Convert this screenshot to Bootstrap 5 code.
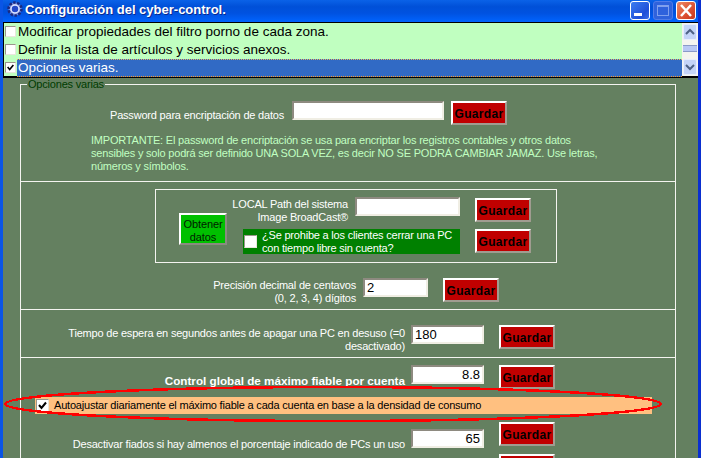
<!DOCTYPE html>
<html lang="es">
<head>
<meta charset="utf-8">
<title>Configuración del cyber-control.</title>
<link href="https://cdn.jsdelivr.net/npm/bootstrap@5.3.0/dist/css/bootstrap.min.css" rel="stylesheet">
<style>
html,body{margin:0;height:458px;overflow:hidden;background:#648060;}
body{font-family:"Liberation Sans",Arial,sans-serif;font-size:11px;letter-spacing:-.2px;line-height:13px;color:#fff;}
.xpwin{position:relative;height:458px;overflow:hidden;border-left:3px solid #0a55e6;border-right:3px solid #0a2fd0;background:#648060;}
.xptitle{height:22px;margin:0 -3px;padding:0 5px 0 6px;background:linear-gradient(180deg,#0a62e8 0,#0050d8 30%,#0052e0 60%,#0064ff 100%);}
.xptitle-text{font-weight:700;font-size:13px;letter-spacing:0;line-height:20px;margin-left:1px;color:#fff;text-shadow:1px 1px 0 #0a2a90;}
.xpctl{width:20px;height:19px;margin:1px 0 0 3px;border:1px solid #fff;border-radius:3px;background:linear-gradient(135deg,#3b7cf0,#1f4fd8 70%,#3c6ee8);}
.xpctl.off{border-color:#4f7be8;background:#2f62dc;}
.xpctl.closer{background:linear-gradient(135deg,#ee8a66,#d8482a 70%,#c63a1e);}
.plist{height:56px;border-top:1px solid #000;border-bottom:2px solid #000;border-left:1px solid #000;background:#c0ffc0;}
.plist-items{width:678px;background:#c0ffc0;}
.plist .list-group-item{height:18px;padding:0;border:0;border-radius:0;background:transparent;color:#000;font-size:13.5px;letter-spacing:0;line-height:17px;}
.plist-label{padding-left:1px;margin-left:1px;flex:1 1 auto;height:18px;white-space:nowrap;}
.plist-label.sel{background:#316ac5;color:#fff;border-top:1px dotted #e8b060;border-bottom:1px dotted #ff9a20;line-height:15px;}
.xpcheck{flex:none;appearance:none;display:block;width:11px;height:11px;margin:3px 0 0 1px;background:#fff center/100% no-repeat;border:1px solid;border-color:#9a968c #e8e6dc #e8e6dc #9a968c;border-radius:0;}
.xpcheck:checked{background-image:url("data:image/svg+xml,%3Csvg xmlns='http://www.w3.org/2000/svg' viewBox='0 0 11 11'%3E%3Cpath d='M2 5l2.5 3L9 2.500' fill='none' stroke='%23000' stroke-width='2'/%3E%3C/svg%3E");}
.xpbar{width:16px;background:#f4f4f0;}
.xpbar-btn{height:16px;margin:1px 1px 0 1px;background:#c4d4f8;border:1px solid #e8eefc;border-radius:2px;}
.xpbar-btn.bot{margin-top:auto;margin-bottom:1px;}
.xpbar-thumb{height:7px;margin:5px 1px 0 1px;background:#b8c8f4;border-top:1px solid #8a9ac8;border-bottom:1px solid #8a9ac8;}
.optset{margin:0 22px 0 17px;padding:0;min-width:0;border:1px solid #f4f4f0;border-bottom:0;height:500px;}
.optset legend{float:none;width:auto;margin:0 0 0 6px;padding:0 1px;font-size:11px;line-height:13px;color:#003c00;}
.sec{border-bottom:1px solid #f4f4f0;}
.sec1{height:91px;padding-top:10px;}
.sec2{height:128px;padding-top:7px;}
.sec3{height:48px;padding-top:15px;}
.sec4{padding-top:7px;}
.lbl{text-align:right;flex:none;white-space:nowrap;}
.note{color:#c0ffc0;margin:9px 0 0 70px;white-space:nowrap;}
.gbtn{flex:none;padding:2px 0 0;width:56px;height:24px;border:2px solid;border-color:#fff #a09c90 #a09c90 #fff;border-radius:0;background:#c00000;color:#000;font-weight:700;font-size:12px;line-height:18px;letter-spacing:.3px;}
.gbtn:hover{background:#c00000;color:#000;border-color:#fff #a09c90 #a09c90 #fff;}
.obt{flex:none;width:48px;height:32px;padding:3px 0 0;border:2px solid;border-color:#fff #8a8a80 #8a8a80 #fff;border-radius:0;background:#00c000;color:#002000;font-size:11px;letter-spacing:-.1px;line-height:13px;}
.obt:hover{background:#00c000;color:#002000;border-color:#fff #8a8a80 #8a8a80 #fff;}
.tin{flex:none;height:19px;padding:0 2px;border:2px solid;border-color:#8e8a80 #f0eee4 #f0eee4 #8e8a80;border-radius:0;background:#fff;color:#000;font-size:13px;line-height:15px;font-family:"Liberation Sans",sans-serif;}
.tin:focus{box-shadow:none;border-color:#8e8a80 #f0eee4 #f0eee4 #8e8a80;}
.tin-r{text-align:right;}
.w152{width:152px}.w105{width:105px}.w65{width:65px}.w73{width:73px}
.pw-row{margin-left:89px;}
.pw-lbl{width:174px;margin:8px 8px 0 0;}
.pw-gap{margin-left:7px;}
.ibox{margin-left:134px;width:402px;height:74px;border:1px solid #f4f4f0;}
.obt-wrap{margin:23px 16px 0 23px;}
.ipath-lbl{width:117px;margin:1px 7px 0 -12px;}
.ipath-gap{margin-left:15px;}
.ipath-row{height:39px;padding-top:7px;}
.ipath-row .gbtn{margin-top:1px;}
.gblock{width:217px;height:25px;background:#008000;}
.gblock .xpcheck{width:13px;height:13px;margin:0 5px 0 1px;}
.prec{margin:15px 0 0 130px;}
.prec-lbl{width:205px;margin:1px 7px 0 0;}
.ms15{margin-left:15px}
.rowt-lbl{width:384px;margin:2px 6px 0 0;}
.rowc-lbl{font-weight:700;font-size:11.700px;letter-spacing:0;margin-top:9px;width:384px;margin-right:6px;}
.orange{margin:8px 0 0 14px;width:617px;height:17px;background:#ffc080;color:#000;line-height:17px;}
.orange .xpcheck{width:13px;height:13px;margin:2px 5px 0 1px;}
.rowd{margin-top:8px;height:23px;}
.rowd-lbl{width:384px;margin:16px 6px 0 0;}
.rowd-in{margin-top:7px;}
.rowe{margin-top:9px;padding-left:390px;}
.ring{position:absolute;left:0;top:385px;pointer-events:none;}
</style>
</head>
<body>
<div class="xpwin">
  <div class="xptitle d-flex align-items-start">
    <svg width="18" height="18" viewBox="0 0 18 18">
      <circle cx="9" cy="9" r="6.500" fill="#7c8cd8" stroke="#1a2a80" stroke-width="2.500" stroke-dasharray="2.500 1.500"/>
      <circle cx="9" cy="9" r="4" fill="#2448c8" stroke="#dfe6ff" stroke-width="1.500"/>
    </svg>
    <span class="xptitle-text flex-grow-1">Configuración del cyber-control.</span>
    <div class="xpctl d-flex align-items-end justify-content-center">
      <svg width="18" height="17" viewBox="0 0 18 17"><rect x="3" y="11" width="8" height="3" fill="#fff"/></svg>
    </div>
    <div class="xpctl off d-flex align-items-center justify-content-center">
      <svg width="18" height="17" viewBox="0 0 18 17"><rect x="3.500" y="3.500" width="11" height="10" fill="none" stroke="#7fa0ee"/><rect x="3" y="3" width="12" height="2" fill="#7fa0ee"/></svg>
    </div>
    <div class="xpctl closer d-flex align-items-center justify-content-center">
      <svg width="18" height="17" viewBox="0 0 18 17"><path d="M4 3l10 11M14 3L4 14" stroke="#fff" stroke-width="2.500"/></svg>
    </div>
  </div>

  <div class="plist d-flex">
    <div class="plist-items list-group flex-grow-1">
      <div class="list-group-item d-flex"><input class="xpcheck" type="checkbox"><span class="plist-label">Modificar propiedades del filtro porno de cada zona.</span></div>
      <div class="list-group-item d-flex"><input class="xpcheck" type="checkbox"><span class="plist-label">Definir la lista de artículos y servicios anexos.</span></div>
      <div class="list-group-item d-flex"><input class="xpcheck" type="checkbox" checked><span class="plist-label sel">Opciones varias.</span></div>
    </div>
    <div class="xpbar d-flex flex-column">
      <div class="xpbar-btn d-flex align-items-center justify-content-center"><svg width="10" height="8" viewBox="0 0 10 8"><path d="M1 6l4-4 4 4" fill="none" stroke="#4d6185" stroke-width="2"/></svg></div>
      <div class="xpbar-thumb"></div>
      <div class="xpbar-btn bot d-flex align-items-center justify-content-center"><svg width="10" height="8" viewBox="0 0 10 8"><path d="M1 2l4 4 4-4" fill="none" stroke="#4d6185" stroke-width="2"/></svg></div>
    </div>
  </div>

  <fieldset class="optset">
    <legend>Opciones varias</legend>

    <div class="sec sec1">
      <div class="d-flex align-items-start pw-row">
        <div class="lbl pw-lbl">Password para encriptación de datos</div>
        <input class="form-control tin w152" type="text">
        <button class="btn gbtn pw-gap" type="button">Guardar</button>
      </div>
      <div class="note">IMPORTANTE: El password de encriptación se usa para encriptar los registros contables y otros datos<br>sensibles y solo podrá ser definido UNA SOLA VEZ, es decir NO SE PODRÁ CAMBIAR JAMAZ. Use letras,<br>números y símbolos.</div>
    </div>

    <div class="sec sec2">
      <div class="ibox d-flex">
        <div class="obt-wrap"><button class="btn obt" type="button">Obtener datos</button></div>
        <div>
          <div class="d-flex align-items-start ipath-row">
            <div class="lbl ipath-lbl">LOCAL Path del sistema<br>Image BroadCast®</div>
            <input class="form-control tin w105" type="text">
            <button class="btn gbtn ipath-gap" type="button">Guardar</button>
          </div>
          <div class="d-flex align-items-start">
            <div class="gblock d-flex align-items-center">
              <input class="xpcheck" type="checkbox">
              <span>¿Se prohibe a los clientes cerrar una PC<br>con tiempo libre sin cuenta?</span>
            </div>
            <button class="btn gbtn ipath-gap" type="button">Guardar</button>
          </div>
        </div>
      </div>
      <div class="d-flex align-items-start prec">
        <div class="lbl prec-lbl">Precisión decimal de centavos<br>(0, 2, 3, 4) dígitos</div>
        <input class="form-control tin w65" type="text" value="2">
        <button class="btn gbtn ms15" type="button">Guardar</button>
      </div>
    </div>

    <div class="sec sec3">
      <div class="d-flex align-items-start">
        <div class="lbl rowt-lbl">Tiempo de espera en segundos antes de apagar una PC en desuso (=0<br>desactivado)</div>
        <input class="form-control tin w73" type="text" value="180">
        <button class="btn gbtn ms15" type="button">Guardar</button>
      </div>
    </div>

    <div class="sec4">
      <div class="d-flex align-items-start">
        <div class="lbl rowc-lbl">Control global de máximo fiable por cuenta</div>
        <input class="form-control tin tin-r w73" type="text" value="8.8">
        <button class="btn gbtn ms15" type="button">Guardar</button>
      </div>
      <div class="orange d-flex">
        <input class="xpcheck" type="checkbox" checked>
        <span>Autoajustar diariamente el máximo fiable a cada cuenta en base a la densidad de consumo</span>
      </div>
      <div class="d-flex align-items-start rowd">
        <div class="lbl rowd-lbl">Desactivar fiados si hay almenos el porcentaje indicado de PCs un uso</div>
        <input class="form-control tin tin-r w73 rowd-in" type="text" value="65">
        <button class="btn gbtn ms15" type="button">Guardar</button>
      </div>
      <div class="d-flex align-items-start rowe">
        <div class="w73"></div>
        <button class="btn gbtn ms15" type="button" aria-label="Guardar"></button>
      </div>
    </div>
  </fieldset>

  <svg class="ring" width="662" height="40" viewBox="0 0 662 40" shape-rendering="crispEdges">
    <ellipse cx="330" cy="19" rx="328" ry="17" fill="none" stroke="#ff0000" stroke-width="2.500"/>
  </svg>
</div>
</body>
</html>
